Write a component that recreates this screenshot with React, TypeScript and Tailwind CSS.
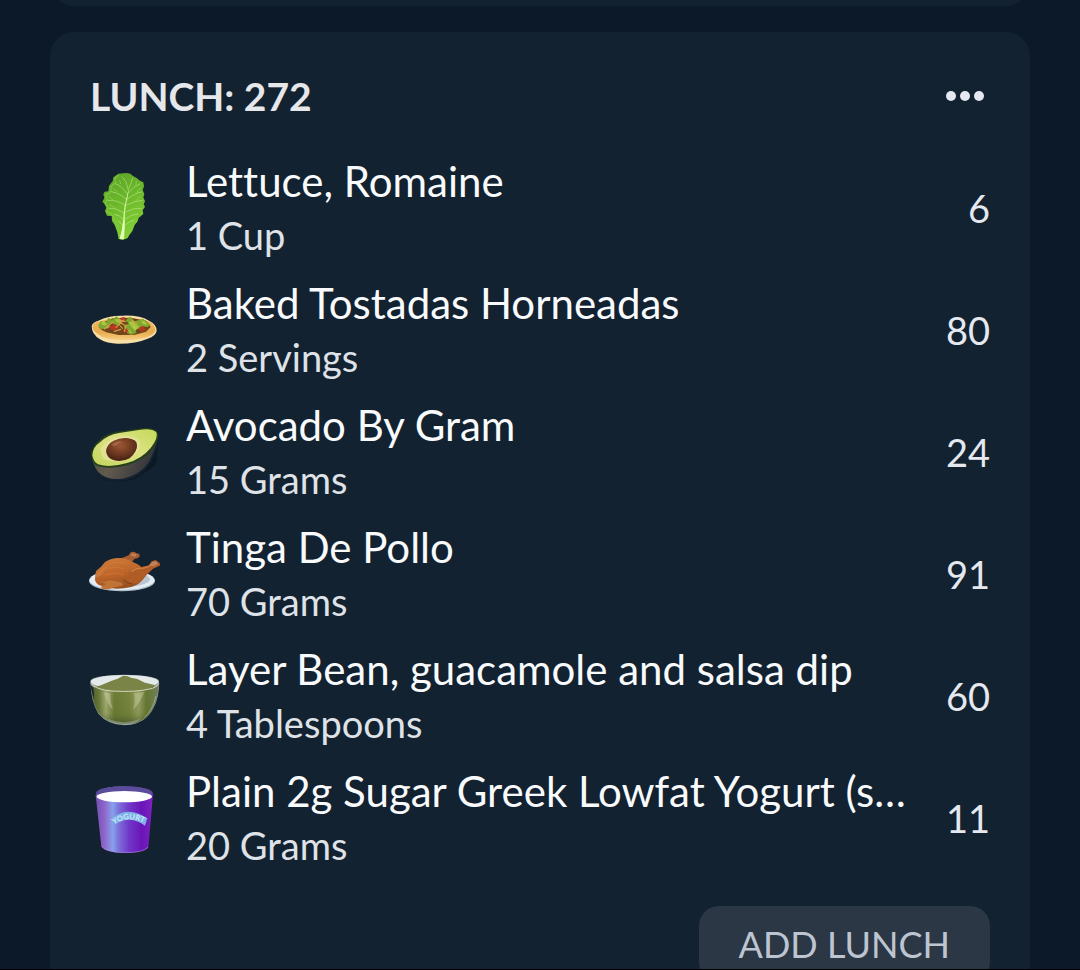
import type { ReactNode } from "react";

function Lettuce() {
  return (
    <svg viewBox="30 42 210 210" className="size-full" aria-hidden="true">
      <defs>
        <linearGradient id="leaf" x1="0" y1="0" x2="0.4" y2="1">
          <stop offset="0" stopColor="#5c9f2b" />
          <stop offset="0.45" stopColor="#69b52a" />
          <stop offset="1" stopColor="#82ce35" />
        </linearGradient>
      </defs>
      <path d="M115 44L130 43L140 42L151 44L158 50L170 57L180 65L190 70L192 82L188 93L193 105L190 115L195 127L191 136L195 143L188 154L190 164L183 171L176 176L173 187L164 198L157 216L148 228L143 237L128 243L116 240L112 220L104 198L96 186L95 171L81 170L75 156L79 146L73 134L67 128L73 117L70 105L74 98L85 97L87 80L98 66L100 55Z" fill="url(#leaf)" />
      <path d="M116 48L104 60L108 70L94 82L90 102L78 106L82 120L76 132L84 144L81 158L94 164L106 184L114 204" fill="none" stroke="#8bd24a" strokeWidth="4" opacity=".6" />
      <g fill="none" stroke="#bfe887" strokeWidth="2.4" strokeLinecap="round" opacity=".75">
        <path d="M144 91Q140 65 126 54M147 87Q155 69 158 58M143 106Q125 80 106 74M145 102Q163 80 180 74M141 122Q118 101 94 98M142 120Q168 101 185 99M138 141Q112 121 84 124M140 138Q165 125 187 124M135 164Q109 146 88 148M138 159Q160 145 184 148M133 184Q119 167 103 166M136 180Q154 165 174 165M132 205Q123 190 114 185M134 200Q149 185 161 184" />
        <path d="M122 75L119 64M168 78L169 66M111 98L99 88M169 102L180 88M100 123L87 112M167 125L181 113M106 148L90 137" opacity=".6" />
      </g>
      <path d="M148 82Q144 113 137 142Q134 165 134 191L132 239L119 240Q129 209 130 176Q131 146 140 115Z" fill="#d7f6a2" />
      <path d="M134 191L132 239L119 240Q128 213 130 183Z" fill="#e2ffb3" />
    </svg>
  );
}

function Tostada() {
  return (
    <svg viewBox="30 -12 210 210" className="size-full" aria-hidden="true">
      <defs>
        <linearGradient id="shell" x1="0" y1="0" x2="0" y2="1">
          <stop offset="0" stopColor="#eeb75d" />
          <stop offset=".65" stopColor="#e8ac50" />
          <stop offset="1" stopColor="#f8cf83" />
        </linearGradient>
      </defs>
      <path d="M35 81Q37 70 55 65Q86 49 128 50Q179 48 207 65Q230 76 230 95Q228 111 203 119Q169 134 117 134Q83 135 60 121Q35 106 35 81Z" fill="#f8dfa5" />
      <path d="M37 85Q38 70 61 66Q131 47 203 66Q226 75 226 96Q216 115 181 119Q111 130 65 113Q41 101 37 85Z" fill="url(#shell)" />
      <path d="M57 85L70 70L98 58L151 56L198 65L212 84L198 98L165 107L116 108L79 100L64 92Z" fill="#6f4519" />
      <g fill="#81a82e">
        <path d="M54 81L63 66L78 71L85 56L105 67L88 75L81 87L64 91Z" />
        <path d="M95 63L109 52L128 65L117 80L98 74Z" />
        <path d="M136 64L151 53L164 67L190 59L199 75L177 91L154 81Z" />
        <path d="M131 82L150 72L170 101L153 107L141 101Z" />
        <path d="M176 66L190 61L210 76L203 85L185 81Z" />
      </g>
      <g fill="#a9c740">
        <path d="M145 70L158 67L177 83L166 96L154 83ZM64 70L75 66L81 79L66 78ZM184 64L197 69L201 78L187 74ZM104 62L119 59L126 71L112 70Z" />
      </g>
      <g fill="#b93721">
        <path d="M89 83L101 76L118 85L105 94L90 91ZM176 87L188 80L197 92L183 98ZM122 56L134 54L136 63L124 67ZM129 94L138 86L145 97L137 102Z" />
      </g>
      <g stroke="#d99c4c" strokeWidth="3.5" strokeLinecap="round">
        <path d="M73 90L99 69M108 85L131 63M117 69L137 80M157 65L171 74M103 97L122 91M139 78L133 97M114 62L136 68" />
      </g>
      <path d="M80 88L89 82M161 82L166 91M119 79L129 89M147 93L153 102" stroke="#d8cf5a" strokeWidth="3" />
    </svg>
  );
}

function Avocado() {
  return (
    <svg viewBox="30 9 210 210" className="size-full overflow-visible" aria-hidden="true">
      <defs>
        <linearGradient id="skin" x1="0" y1="0" x2="1" y2=".3">
          <stop offset="0" stopColor="#47503c" />
          <stop offset=".45" stopColor="#625a4e" />
          <stop offset="1" stopColor="#33353a" />
        </linearGradient>
        <radialGradient id="pit" cx="46%" cy="32%" r="65%">
          <stop offset="0" stopColor="#9c5633" />
          <stop offset=".55" stopColor="#713a22" />
          <stop offset="1" stopColor="#492313" />
        </radialGradient>
        <linearGradient id="flesh" x1="0" y1="1" x2="1" y2="0">
          <stop offset="0" stopColor="#c3d65c" />
          <stop offset=".55" stopColor="#dde183" />
          <stop offset="1" stopColor="#c3da5a" />
        </linearGradient>
      </defs>
      <path d="M42 162Q50 198 95 200Q160 207 198 164Q230 128 235 74L230 140Q224 163 195 174Q165 207 99 202Q49 199 42 162Z" fill="#0a1720" opacity=".75" />
      <path d="M34 112Q36 151 54 173Q79 200 128 194Q180 184 207 143Q225 108 235 64Z" fill="url(#skin)" />
      <path d="M34 126Q33 99 56 80Q77 59 109 53L170 45Q218 37 232 53Q242 74 216 108Q190 139 145 153Q92 168 52 156Q37 150 34 126Z" fill="#26401b" />
      <path d="M37 124Q38 99 61 84Q82 63 117 57L176 48Q216 42 229 55Q236 71 212 102Q185 135 141 147Q90 162 54 151Q40 144 37 124Z" fill="url(#flesh)" />
      <path d="M61 106Q79 72 129 65Q174 64 181 86Q178 124 133 140Q94 148 68 133Z" fill="#e8e5a1" opacity=".65" />
      <path d="M78 111Q80 91 101 80Q122 70 145 73Q171 77 171 93Q173 112 149 133Q128 145 102 139Q80 132 78 111Z" fill="url(#pit)" />
      <path d="M93 92Q110 78 129 83Q118 85 105 97Z" fill="#c58667" opacity=".45" />
    </svg>
  );
}

function RoastChicken() {
  return (
    <svg viewBox="30 0 210 210" className="size-full overflow-visible" aria-hidden="true">
      <defs>
        <linearGradient id="roast" x1=".2" y1="0" x2=".5" y2="1">
          <stop offset="0" stopColor="#cd7a3b" />
          <stop offset=".5" stopColor="#c0662a" />
          <stop offset="1" stopColor="#96501f" />
        </linearGradient>
      </defs>
      <ellipse cx="126" cy="126" rx="99" ry="31" fill="#aebdca" />
      <ellipse cx="126" cy="123" rx="98" ry="30" fill="#e3edf5" />
      <ellipse cx="127" cy="121" rx="83" ry="23" fill="#b9c6d2" />
      <path d="M108 61Q128 58 146 49L152 40Q162 36 169 43Q181 43 179 52Q176 59 164 59L155 70L130 85Z" fill="#a75c31" />
      <path d="M45 119L48 96L63 83L75 69Q103 51 139 60L173 76Q193 86 193 110Q185 135 154 144Q104 156 65 141Q45 136 45 119Z" fill="url(#roast)" />
      <path d="M143 105Q154 85 175 86L207 79L215 67L227 63L234 69Q243 72 239 80L219 89Q200 105 187 124Q170 139 149 132Q136 125 143 105Z" fill="#b05c26" />
      <path d="M155 98Q167 86 187 88L208 82" fill="none" stroke="#d08045" strokeWidth="4" />
      <path d="M56 127Q75 131 91 124L119 129Q133 134 126 140L101 145Q87 155 65 149L64 140L80 136Z" fill="#c17438" />
      <path d="M47 103Q60 96 69 85L95 75L75 90L66 105Q57 116 47 114Z" fill="#ca783d" />
      <path d="M84 76Q109 65 137 74M74 91Q104 79 132 91M76 108Q105 99 132 108" fill="none" stroke="#e08a43" strokeWidth="4" opacity=".3" />
      <path d="M206 80L216 69L230 67L233 76L219 82ZM151 50L157 43L171 46L167 53Z" fill="#bd8259" />
      <path d="M129 121Q139 133 157 135" fill="none" stroke="#7c3f17" strokeWidth="3" />
    </svg>
  );
}

function Bowl() {
  return (
    <svg viewBox="30 6 210 210" className="size-full overflow-visible" aria-hidden="true">
      <defs>
        <linearGradient id="dip" x1="0" y1="0" x2="1" y2="0">
          <stop offset="0" stopColor="#435523" />
          <stop offset=".12" stopColor="#69783a" />
          <stop offset=".22" stopColor="#aab37e" />
          <stop offset=".35" stopColor="#697b35" />
          <stop offset=".57" stopColor="#79863f" />
          <stop offset=".7" stopColor="#9aa66a" />
          <stop offset=".82" stopColor="#647631" />
          <stop offset="1" stopColor="#728062" />
        </linearGradient>
        <linearGradient id="dipShade" x1="0" y1="0" x2="0" y2="1">
          <stop offset="0" stopColor="#7b863c" stopOpacity=".1" />
          <stop offset=".72" stopColor="#5b6c28" stopOpacity=".25" />
          <stop offset="1" stopColor="#3c4a25" stopOpacity=".7" />
        </linearGradient>
      </defs>
      <path d="M31 67Q31 49 133 47Q236 49 237 67Q239 114 219 150Q195 194 143 198Q86 201 55 164Q33 130 31 67Z" fill="#94a1a2" />
      <ellipse cx="134" cy="68" rx="102" ry="20" fill="#e3eae9" />
      <path d="M43 84L63 79L95 65L113 59L128 51Q140 49 153 56L172 60L195 71L224 78L219 92L134 101L50 92Z" fill="#7a8446" />
      <path d="M33 80Q54 94 96 97Q163 101 216 89Q228 87 236 79Q233 132 208 166Q183 195 139 195Q82 196 54 160Q36 128 33 80Z" fill="url(#dip)" />
      <path d="M33 80Q54 94 96 97Q163 101 216 89Q228 87 236 79Q233 132 208 166Q183 195 139 195Q82 196 54 160Q36 128 33 80Z" fill="url(#dipShade)" />
      <path d="M32 73Q48 92 96 96Q167 101 218 88Q233 82 237 73" fill="none" stroke="#cfd4ba" strokeWidth="3" />
      <path d="M31 76L40 87L43 121Q34 99 31 76Z" fill="#142535" />
      <path d="M72 101L91 103Q90 130 99 153Q82 137 72 101ZM162 103L193 99Q180 132 159 153Q167 131 162 103Z" fill="#d7d7b3" opacity=".4" />
      <path d="M80 178Q130 201 185 178Q161 202 126 198Q98 197 80 178Z" fill="#abb0a2" opacity=".5" />
      <path d="M228 111Q219 151 194 175" fill="none" stroke="#b4bbb4" strokeWidth="2" />
    </svg>
  );
}

function YogurtCup() {
  return (
    <svg viewBox="30 27 210 210" className="size-full" aria-hidden="true">
      <defs>
        <linearGradient id="cup" x1="0" y1="0" x2="1" y2="0">
          <stop offset="0" stopColor="#7051b1" />
          <stop offset=".15" stopColor="#8f64cb" />
          <stop offset=".3" stopColor="#87a2ec" />
          <stop offset=".4" stopColor="#7c70d9" />
          <stop offset=".58" stopColor="#7038c8" />
          <stop offset=".8" stopColor="#6a14b8" />
          <stop offset="1" stopColor="#7d24c0" />
        </linearGradient>
        <path id="label-arc" d="M101 151Q147 121 198 151" />
      </defs>
      <path d="M47 64Q51 39 133 37Q215 39 219 61L205 220Q195 236 134 237Q74 236 64 217Z" fill="url(#cup)" />
      <ellipse cx="133" cy="57" rx="85" ry="20" fill="#5b4c9b" />
      <ellipse cx="133" cy="68" rx="83" ry="17" fill="#ffffff" />
      <path d="M65 217Q78 234 133 236Q190 236 204 220" fill="none" stroke="#ab87dc" strokeWidth="3" opacity=".65" />
      <path d="M98 131Q146 95 202 133L195 155Q147 121 105 152Z" fill="#7fb2e6" />
      <text fill="#c9e8fb" fontFamily="Lato, sans-serif" fontSize="23" fontWeight="700">
        <textPath href="#label-arc">YOGURT</textPath>
      </text>
    </svg>
  );
}

type Food = { name: string; amount: string; calories: number; icon: ReactNode };

const foods: Food[] = [
  { name: "Lettuce, Romaine", amount: "1 Cup", calories: 6, icon: <Lettuce /> },
  { name: "Baked Tostadas Horneadas", amount: "2 Servings", calories: 80, icon: <Tostada /> },
  { name: "Avocado By Gram", amount: "15 Grams", calories: 24, icon: <Avocado /> },
  { name: "Tinga De Pollo", amount: "70 Grams", calories: 91, icon: <RoastChicken /> },
  { name: "Layer Bean, guacamole and salsa dip", amount: "4 Tablespoons", calories: 60, icon: <Bowl /> },
  { name: "Plain 2g Sugar Greek Lowfat Yogurt (s…", amount: "20 Grams", calories: 11, icon: <YogurtCup /> },
];

function FoodRow({ food }: { food: Food }) {
  return (
    <li className="flex items-center">
      <div className="mr-[26px] size-[70px] shrink-0">{food.icon}</div>
      <div className="min-w-0 flex-1 whitespace-nowrap leading-[54px]">
        <p className="text-[42px] text-[#f8fafc]">{food.name}</p>
        <p className="text-[38px] text-[#dfe3e8]">{food.amount}</p>
      </div>
      <span className="pl-4 text-right text-[38px] text-[#e5e9ef]">{food.calories}</span>
    </li>
  );
}

export default function App() {
  return (
    <main className="h-screen overflow-y-auto border-b border-black bg-[#0c1929] px-[50px] font-['Lato',sans-serif] [font-variant-ligatures:none] [scrollbar-width:none]">
      <div className="flex h-1.5 items-end overflow-hidden">
        <div className="h-12 w-full shrink-0 rounded-b-3xl bg-[#132231]" />
      </div>
      <section aria-labelledby="lunch-title" className="mt-[26px] rounded-3xl bg-[#132231] px-10 pt-10 pb-10">
        <header className="flex items-center justify-between">
          <h2 id="lunch-title" className="text-[39px] leading-[48px] font-bold text-[#e5e7ea]">
            LUNCH: 272
          </h2>
          <button type="button" aria-label="Lunch options" className="flex h-12 items-center gap-1 px-1.5">
            <span className="size-2.5 rounded-full bg-[#e5e8f0]" />
            <span className="size-2.5 rounded-full bg-[#e5e8f0]" />
            <span className="size-2.5 rounded-full bg-[#e5e8f0]" />
          </button>
        </header>
        <ul className="mt-[34px] flex flex-col gap-3.5">
          {foods.map((food) => (
            <FoodRow key={food.name} food={food} />
          ))}
        </ul>
        <div className="mt-[34px] flex justify-end">
          <button type="button" className="rounded-[20px] bg-[#2c3746] px-10 py-3 text-[36px] leading-[52px] text-[#bdc5d0]">
            ADD LUNCH
          </button>
        </div>
      </section>
    </main>
  );
}
